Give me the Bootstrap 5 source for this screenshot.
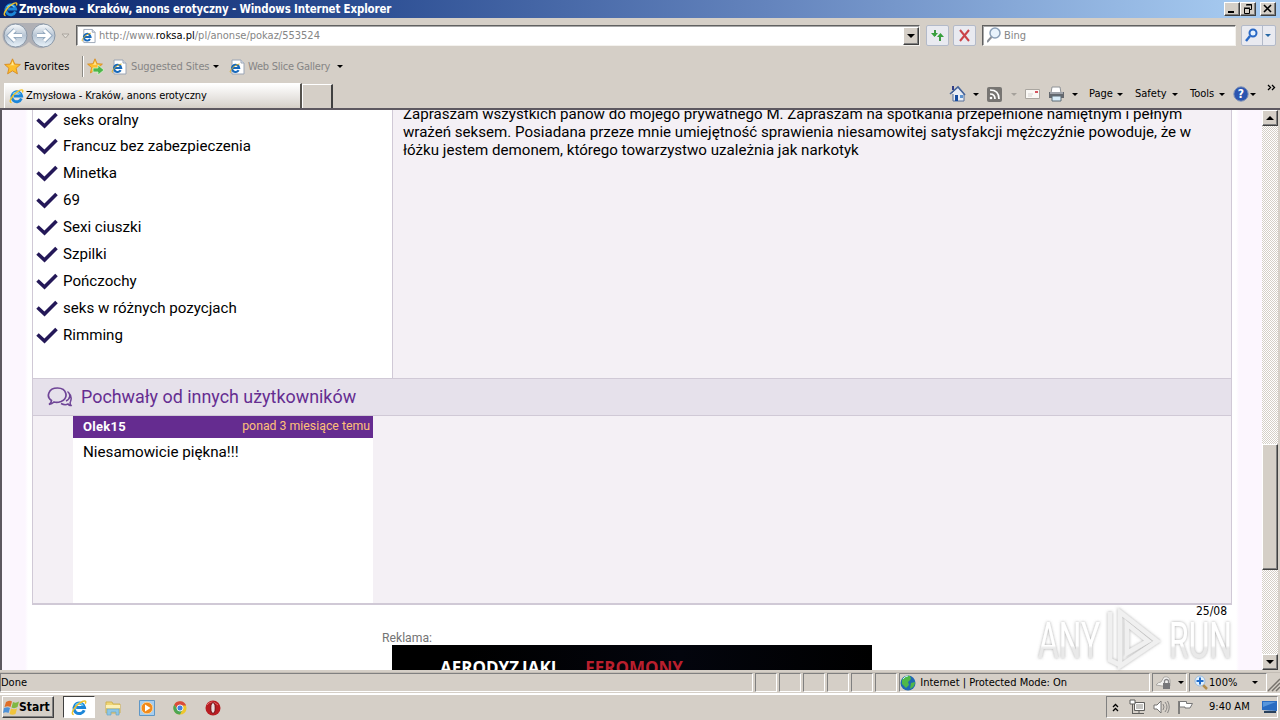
<!DOCTYPE html>
<html lang="pl">

<head>
    <meta charset="UTF-8">
    <meta name="viewport" content="width=device-width, initial-scale=1.0">
    <title>Zmysłowa - Kraków, anons erotyczny</title>
    <link href="https://cdn.jsdelivr.net/npm/bootstrap@5.3.3/dist/css/bootstrap.min.css" rel="stylesheet">
    <style>
        body { width: 1280px; height: 720px; overflow: hidden; background: #d5cfc7; color: #000; font: 11px/14px "DejaVu Sans Condensed", "DejaVu Sans", sans-serif; white-space: nowrap; }
        svg { flex: none; display: block; }
        .sunken { border: 1px solid; border-color: #808080 #fff #fff #808080; }
        .raised { border: 1px solid; border-color: #fff #404040 #404040 #fff; box-shadow: inset -1px -1px #808080; background: #d5cfc7; }
        .dim { color: #858585; }
        .arr { width: 0; height: 0; flex: none; border: 3px solid transparent; border-top-color: #000; border-bottom: 0; }
        .arr.off { border-top-color: #a5a19b; }
        .arr.big { border-width: 4px 4px 0; }

        /* title bar */
        .titlebar { height: 18px; padding-left: 3px; background: linear-gradient(90deg, #0a246a 0%, #2c4e93 28%, #6484bd 60%, #a6caf0 97%); color: #fff; font-weight: bold; font-size: 11.4px; letter-spacing: -.13px; }
        .win-btn { width: 16px; height: 14px; }

        /* address bar */
        .addressbar { height: 35px; padding-left: 2px; }
        .field { height: 21px; background: #fff; border: 1px solid; border-color: #606060 #f4f2ee #f4f2ee #606060; box-shadow: inset 1px 1px #a8a8a8; }
        .url-field { width: 844px; margin-left: 6px; }
        .drop-btn { width: 16px; height: 18px; }
        .tool-btn { height: 21px; background: #e9eaf0; border: 1px solid #b3bac9; border-radius: 2px; }
        #url { margin-left: 3px; }
        #reload { margin-left: 6px; }
        #search { width: 254px; margin-left: 6px; }
        #search span { margin-left: -2px; }
        #go { margin-left: 5px; }

        /* favorites */
        .favbar { height: 27px; padding-left: 4px; }
        .favbar-sep { width: 1px; height: 21px; background: #8c8a84; box-shadow: 1px 0 #fff; }
        #fav { width: 58px; margin-left: 3px; letter-spacing: .1px; }
        #sites-icon { margin-left: 6px; }
        #sites { width: 82px; margin-left: 4px; letter-spacing: -.1px; }
        #slice-icon { margin-left: 10px; }
        #slice { width: 89px; margin-left: 3px; letter-spacing: -.25px; }

        /* tabs and command bar */
        .tabrow { height: 28px; padding-left: 4px; }
        .tab { width: 298px; height: 25px; background: linear-gradient(#fff, #dedad5 80%, #d5cfc7); border: 1px solid #fff; border-right: 2px solid #55524d; border-bottom: 0; padding-left: 4px; }
        .new-tab { width: 31px; height: 24px; border: 1px solid #fff; border-right: 2px solid #404040; border-bottom: 0; }
        #tab-title { margin-left: 2px; letter-spacing: -.1px; }
        #commands { margin-left: 616px; }
        #a1 { margin: 0 8px 0 7px; }
        #a2 { margin: 0 8px 0 9px; }
        #printer { margin-left: 8px; }
        #a3 { margin: 0 11px 0 7px; }
        .menu-page { width: 28px; }
        .menu-safety { width: 37px; margin-left: 12px; }
        .menu-tools { width: 29px; margin-left: 12px; }
        #help { margin: 0 1px 0 8px; }
        #more { margin: -12px 0 0 11px; }

        /* page */
        .viewport-row { height: 562px; border-top: 2px solid #5d5860; border-left: 2px solid #5d5860; }
        .page { width: 1260px; height: 560px; background: linear-gradient(90deg, #fcf6fe 23px, #fff 26px, #fff 1234px, #fcf6fe 1237px); padding: 0 30px; font-family: Roboto, sans-serif; font-size: 16px; line-height: 18px; }
        .panel { width: 1200px; height: 495px; border: 1px solid #d0c9d6; border-top: 0; border-bottom-width: 2px; background: #f4f0f5; }
        .profile { height: 268px; }
        .services { width: 360px; background: #fff; border-right: 1px solid #d0c9d6; padding: 0 0 0 3px; margin: 0; flex: none; }
        .services li { height: 27px; display: flex; align-items: center; gap: 5px; font-size: 15.1px; }
        .services li:first-child { height: 25px; margin-top: -3px; }
        .about { padding: 0 0 0 10px; margin-top: -5px; font-size: 15.1px; }
        .praise-head { height: 38px; background: #e6e1eb; border: solid #d0c9d6; border-width: 1px 0; color: #652d91; font-size: 17.9px; padding-left: 14px; }
        #praise-title { margin-left: 8px; }
        .praise-body { padding-left: 40px; }
        .praise { width: 300px; height: 187px; background: #fff; }
        .praise-name { height: 22px; background: #652c90; color: #fff; font-size: 13px; font-weight: bold; padding: 0 3px 0 10px; }
        #nick { letter-spacing: .3px; }
        .praise-date { color: #ffc179; font-weight: normal; font-size: 12.3px; padding-bottom: 2px; }
        #praise-text { padding: 5px 10px; font-size: 15.2px; }
        .page-date { font: 12px/12px "DejaVu Sans Condensed", sans-serif; height: 16px; padding-right: 5px; }
        .ad-label { color: #747474; font-size: 12.2px; height: 24px; padding: 8px 0 0 350px; }
        .ad { width: 480px; height: 25px; margin-left: 360px; background: linear-gradient(90deg, #000 15%, #03050d 60%, #000); font: bold 17px/20px "Open Sans", sans-serif; overflow: hidden; padding: 13px 0 0 48px; }
        .ad-gap { margin-left: 3px; }
        .ad-red { color: #b91f2d; margin-left: 29px; }

        .scrollbar { width: 16px; height: 560px; background: repeating-conic-gradient(#fff 0 25%, #d5cfc7 0 50%) 0 0 / 2px 2px; }
        .scroll-btn { height: 16px; }
        .scroll-thumb { height: 126px; margin-top: 318px; }
        #scroll-down { margin-top: 84px; }
        .up { transform: rotate(180deg); }
        .watermark { position: absolute; left: 1034px; top: 604px; }

        /* status bar */
        .statusbar { height: 22px; margin-top: 2px; border-bottom: 1px solid #fff; border-top: 1px solid #c3bdb5; }
        .statusbar .sunken { height: 19px; }
        #done { width: 754px; padding-top: 2px; }
        .cell { width: 22px; margin-left: 2px; }
        #zone { width: 251px; margin-left: 2px; gap: 4px; }
        #lock { width: 35px; margin-left: 2px; padding-left: 2px; gap: 3px; }
        #zoom { width: 78px; margin-left: 2px; padding: 0 8px 0 4px; gap: 1px; }

        /* taskbar */
        .taskbar { height: 25px; border-top: 1px solid #fff; padding: 1px 2px 0; }
        .start { width: 52px; height: 22px; font-weight: bold; font-size: 12px; }
        #start-label { margin-left: -1px; }
        .task-on { width: 32px; height: 22px; background: #fff; border-color: #404040 #fff #fff #404040; margin-left: 9px; }
        #quick { gap: 18px; margin-left: 10px; }
        .tray { width: 172px; height: 22px; }
        #chev { margin-left: 5px; }
        #net { margin-left: 10px; }
        #vol { margin-left: 7px; }
        #flag { margin-left: 7px; }
        #clock { margin: 0 12px 0 15px; }
    </style>
</head>

<body class="d-flex flex-column">
    <!-- shared icons -->
    <svg width="0" height="0" class="position-absolute">
        <defs>
            <linearGradient id="orb" x2="0" y2="1">
                <stop stop-color="#f9fbfd" />
                <stop offset=".5" stop-color="#b7c5d4" />
                <stop offset="1" stop-color="#e9f3fa" />
            </linearGradient>
            <symbol id="ie" viewBox="0 0 16 16">
                <path d="M13.200 10.700A5.300 5.300 0 1 1 13.500 8H5.200" fill="none" stroke="#1c86d8" stroke-width="3" />
                <path d="M12.200 6.200A4.600 4.600 0 0 0 4.200 6" fill="none" stroke="#6fd0f8" stroke-width="1.300" />
                <path d="M2.800 15C-1 15 3 7.500 8.500 3.700 12.500.9 16 .3 14.300 4.200" fill="none" stroke="#f0c32b" stroke-width="1.500" />
            </symbol>
            <symbol id="page-ie" viewBox="0 0 16 16">
                <path d="M3 1h9l3 3v11H3z" fill="#fff" stroke="#9ba5b5" />
                <path d="M12 1v3h3" fill="#dde4ee" stroke="#9ba5b5" />
                <path d="M9.700 11.200A3.600 3.600 0 1 1 10.200 9H4" fill="none" stroke="#1769bb" stroke-width="2.100" />
                <path d="M2 13.500C-1 13 5 6 10.500 5" fill="none" stroke="#d9b22a" />
            </symbol>
            <symbol id="star" viewBox="0 0 16 16">
                <path d="M8 .8l2.100 4.900 5.300.4-4 3.500 1.200 5.300L8 12.100l-4.600 2.800 1.200-5.300-4-3.500 5.300-.4z" fill="#fdbf2d" stroke="#d6861b" stroke-width=".8" />
                <path d="M8 3l1.300 3.500 3 .3H5L7 6z" fill="#ffe89a" />
            </symbol>
            <symbol id="check" viewBox="0 0 22 18">
                <path d="M1.500 8.500l7 6.500L20.500 3" fill="none" stroke="#241858" stroke-width="3.600" />
            </symbol>
        </defs>
    </svg>

    <div class="titlebar d-flex align-items-center">
        <svg width="15" height="16"><use href="#ie" /></svg>
        <span class="me-auto" id="win-title">&#8202;Zmysłowa - Kraków, anons erotyczny - Windows Internet Explorer</span>
        <span class="raised win-btn"><svg width="14" height="12"><path d="M3 8h6v2H3z" /></svg></span>
        <span class="raised win-btn"><svg width="14" height="12"><path d="M5.500 1.500h5v5h-2M5 2h6M3.500 5.500h5v5h-5zM3 5h6" fill="none" stroke="#000" /></svg></span>
        <span class="raised win-btn ms-1 me-1"><svg width="14" height="12"><path d="M3 2l7 7M10 2L3 9" stroke="#000" stroke-width="1.600" /></svg></span>
    </div>

    <div class="addressbar d-flex align-items-center">
        <svg width="68" height="28">
            <path d="M13 1h28a13 13 0 0 1 0 25q-7 1-14-6-7 7-14 6A12 12 0 0 1 13 1z" fill="#b0b0b5" />
            <g fill="url(#orb)" stroke="#8896a6">
                <circle cx="13.500" cy="13.500" r="11.500" />
                <circle cx="41.500" cy="13.500" r="11.500" />
            </g>
            <path d="M20 13.500H8M13 8l-5.500 5.500L13 19M35 13.500h12M42 8l5.500 5.500L42 19" fill="none" stroke="#8da4bb" stroke-width="4.600" />
            <path d="M20 13.500H8M13 8l-5.500 5.500L13 19M35 13.500h12M42 8l5.500 5.500L42 19" fill="none" stroke="#fff" stroke-width="3" />
            <path d="M60 12h7l-3.500 4z" fill="#e2ded8" stroke="#aaa59e" />
        </svg>
        <div class="field url-field d-flex align-items-center">
            <svg class="ms-1" width="15" height="16"><use href="#page-ie" /></svg>
            <span class="dim me-auto" id="url">http://www.<span class="text-black">roksa.pl</span>/pl/anonse/pokaz/553524</span>
            <span class="raised drop-btn d-flex align-items-center justify-content-center"><i class="arr big"></i></span>
        </div>
        <span class="tool-btn d-flex align-items-center px-1" id="reload">
            <svg width="13" height="15"><path d="M4 2v6M9 13V7" stroke="#2f8f34" stroke-width="1.800" /><path d="M0 5h7L3.500 9zM6 9h7L9.500 5z" fill="#37a03b" /></svg>
        </span>
        <span class="tool-btn d-flex align-items-center ms-1 px-1">
            <svg width="13" height="13"><path d="M2 1l9 11M11 1l-9 11" stroke="#cb4248" stroke-width="2" /></svg>
        </span>
        <div class="field d-flex align-items-center" id="search">
            <svg class="mx-1" width="15" height="17"><circle cx="8" cy="6" r="5" fill="#e9f3fc" stroke="#8ba0b8" stroke-width="1.500" /><path d="M4.500 10L0 15" stroke="#8b8f96" stroke-width="2" /></svg>
            <span class="dim">Bing</span>
        </div>
        <span class="tool-btn d-flex align-items-center" id="go">
            <svg width="33" height="19"><circle cx="11" cy="7" r="3.500" fill="#e6f2ff" stroke="#2868c5" stroke-width="2" /><path d="M8 10l-4 5" stroke="#2868c5" stroke-width="2.400" /><path d="M20.500 0v19" stroke="#b3bac9" /><path d="M23 8h6l-3 3z" fill="#2868a5" /></svg>
        </span>
    </div>

    <div class="favbar d-flex align-items-center">
        <svg width="17" height="17"><use href="#star" /></svg>
        <span id="fav">Favorites</span>
        <span class="favbar-sep"></span>
        <svg class="ms-1" width="18" height="17"><use href="#star" width="16" height="16" /><path d="M6 10h5V7l6 5-6 5v-3H6z" fill="#4cb64a" stroke="#d9f4cf" stroke-width=".8" /></svg>
        <svg id="sites-icon" width="16" height="16"><use href="#page-ie" /></svg>
        <span class="dim" id="sites">Suggested Sites</span><i class="arr"></i>
        <svg id="slice-icon" width="16" height="16"><use href="#page-ie" /></svg>
        <span class="dim" id="slice">Web Slice Gallery</span><i class="arr"></i>
    </div>

    <div class="tabrow d-flex align-items-end">
        <div class="tab d-flex align-items-center">
            <svg width="15" height="16"><use href="#ie" /></svg>
            <span id="tab-title">Zmysłowa - Kraków, anons erotyczny</span>
        </div>
        <div class="new-tab"></div>
        <div class="d-flex align-items-center align-self-center" id="commands">
            <svg width="17" height="18"><path d="M3 8l6-6 6 7v7H4V9" fill="#e9edf5" stroke="#59709a" /><path d="M1 9l8-7 7 8" fill="none" stroke="#46659b" stroke-width="1.600" /><path d="M3 1h2v4H3z" fill="#333f87" /><path d="M6 10h3v6H6z" fill="#174da0" /><path d="M11 10h3v3h-3z" fill="#5c93d0" /></svg>
            <i class="arr" id="a1"></i>
            <svg width="15" height="15"><rect width="15" height="15" rx="2" fill="#777572" /><path d="M3 3q9 0 9 9M3 7q5 0 5 5" fill="none" stroke="#fff" stroke-width="1.700" /><circle cx="4" cy="11" r="1.300" fill="#fff" /></svg>
            <i class="arr off" id="a2"></i>
            <svg width="15" height="12"><path d="M.5 1.500h14v9H.5z" fill="#faf8f5" stroke="#aaa6a0" /><path d="M10 3h3v2h-3z" fill="#d5545e" /><path d="M3 6h5M3 8h4" stroke="#d5d2d0" /></svg>
            <svg id="printer" width="17" height="16"><path d="M4 1h8l1 6H3z" fill="#fff" stroke="#8e9296" /><path d="M1 6h15v6H1z" fill="#64686e" /><path d="M2 7h13" stroke="#b4b9c0" stroke-width="1.500" /><path d="M4 10h9v5H4z" fill="#d9edf9" stroke="#5f6c77" /></svg>
            <i class="arr" id="a3"></i>
            <span class="menu-page">Page</span><i class="arr"></i>
            <span class="menu-safety">Safety</span><i class="arr"></i>
            <span class="menu-tools">Tools</span><i class="arr"></i>
            <svg id="help" width="16" height="16"><circle cx="8" cy="8" r="7.200" fill="#2b55b0" stroke="#8193b7" /><text x="8" y="12.300" text-anchor="middle" font-size="12" font-weight="bold" fill="#fff">?</text></svg>
            <i class="arr"></i>
            <svg id="more" width="9" height="8"><path d="M1 1l2.500 2.500L1 6M5 1l2.500 2.500L5 6" fill="none" stroke="#000" stroke-width="1.300" /></svg>
        </div>
    </div>

    <div class="viewport-row d-flex overflow-hidden">
        <div class="page">
            <div class="panel">
                <div class="profile d-flex">
                    <ul class="services list-unstyled" id="services"></ul>
                    <div class="about">Zapraszam wszystkich panów do mojego prywatnego M. Zapraszam na spotkania przepełnione namiętnym i pełnym<br>wrażeń seksem. Posiadana przeze mnie umiejętność sprawienia niesamowitej satysfakcji mężczyźnie powoduje, że w<br>łóżku jestem demonem, którego towarzystwo uzależnia jak narkotyk</div>
                </div>
                <div class="praise-head d-flex align-items-center">
                    <svg width="26" height="24"><path d="M19 16c4.500-2 5-7 1.500-9.500M14 18.500q4 2 7 .5 1.500 2 3 1.500-1.500-2-.5-4 2-5-2-9" fill="none" stroke="#6f4597" stroke-width="1.500" /><path d="M4.500 15.500C-1 12 1 3 10.500 3S22 13 14 16.500q-4 1.500-7 .5-2 2-5 2.500 2.500-1.500 2.500-4z" fill="#e6e1eb" stroke="#6f4597" stroke-width="1.700" /></svg>
                    <span id="praise-title">Pochwały od innych użytkowników</span>
                </div>
                <div class="praise-body">
                    <div class="praise">
                        <div class="praise-name d-flex justify-content-between align-items-center"><span id="nick">Olek15</span><span class="praise-date">ponad 3 miesiące temu</span></div>
                        <div id="praise-text">Niesamowicie piękna!!!</div>
                    </div>
                </div>
            </div>
            <div class="page-date text-end">25/08</div>
            <div class="ad-label">Reklama:</div>
            <div class="ad text-white">AERODYZ<span class="ad-gap">JAKI</span><span class="ad-red">FEROMONY</span></div>
        </div>
        <div class="scrollbar">
            <div class="raised scroll-btn d-flex align-items-center justify-content-center"><i class="arr big up"></i></div>
            <div class="raised scroll-thumb"></div>
            <div class="raised scroll-btn d-flex align-items-center justify-content-center" id="scroll-down"><i class="arr big"></i></div>
        </div>
    </div>

    <svg class="watermark" width="202" height="68">
        <defs>
            <filter id="soft" x="-10%" y="-20%" width="120%" height="140%"><feDropShadow dx="0" dy="0" stdDeviation="1.600" flood-color="#777" flood-opacity=".65" /></filter>
            <linearGradient id="fade" x2="0" y2="1"><stop offset=".58" stop-color="#fff" /><stop offset=".62" stop-color="#e9e9e9" /></linearGradient>
        </defs>
        <g filter="url(#soft)" fill="url(#fade)" font-family="Roboto" font-size="50">
            <text x="4" y="54" textLength="62" lengthAdjust="spacingAndGlyphs">ANY</text>
            <text x="135" y="54" textLength="63" lengthAdjust="spacingAndGlyphs">RUN</text>
            <path d="M76 8v48l12 6M86 8v54l37-25zM93 20v29l21-12z" fill="none" stroke="#f0f0f0" stroke-width="4.500" />
        </g>
    </svg>

    <div class="statusbar d-flex">
        <div class="sunken" id="done">Done</div>
        <div class="sunken cell"></div><div class="sunken cell"></div><div class="sunken cell"></div><div class="sunken cell"></div><div class="sunken cell"></div><div class="sunken cell"></div>
        <div class="sunken d-flex align-items-center" id="zone">
            <svg width="16" height="16"><circle cx="8" cy="8" r="7.500" fill="#1f68b4" /><path d="M2 5q3-5 8-4l1 3-3 3 1 3-3 3-4-4zM11 8l4-1q0 5-5 7z" fill="#4fb848" /><path d="M3 4q2-3 5-3" stroke="#c6ecfa" fill="none" /></svg>
            <span>Internet | Protected Mode: On</span>
        </div>
        <div class="sunken d-flex align-items-center" id="lock">
            <svg width="20" height="16"><path d="M1 10q2-3 5-3l3-5q5-1 6 3v6H7z" fill="#f3f2f0" stroke="#aaa7a3" /><path d="M8 8h7v6H8z" fill="#77777a" /><path d="M9.500 8V5.500q2-2 4 0V8" fill="none" stroke="#88878a" stroke-width="1.300" /></svg>
            <i class="arr"></i>
        </div>
        <div class="sunken d-flex align-items-center" id="zoom">
            <svg width="14" height="15"><path d="M8 9l5 5" stroke="#b38d4d" stroke-width="2.500" /><circle cx="6" cy="6" r="5" fill="#e3f1fd" stroke="#9bbbdc" /><path d="M6 2.500v7M2.500 6h7" stroke="#216dcb" stroke-width="2" /></svg>
            <span>100%</span><i class="arr ms-auto"></i>
        </div>
        <svg width="13" height="19"><path d="M1 18L13 6M5 18l8-8M9 18l4-4" stroke="#77736d" stroke-width="1.500" /></svg>
    </div>

    <div class="taskbar d-flex">
        <div class="raised start d-flex align-items-center">
            <svg width="17" height="17"><path d="M3 3q4-2 6-.5L7.500 8Q5 6.500 1.500 8z" fill="#df6e28" /><path d="M10 3q3 1.500 6-.5L14.500 8q-3 2-6 .5z" fill="#80b842" /><path d="M1 9q4-1.500 6 0l-1.500 5Q3 12.500 0 14z" fill="#4d91d8" /><path d="M8 9.500q3 1.500 6 0L12.500 15q-3 1.500-6 0z" fill="#f0c43c" /></svg>
            <span id="start-label">Start</span>
        </div>
        <div class="sunken task-on d-flex align-items-center justify-content-center"><svg width="16" height="17"><use href="#ie" /></svg></div>
        <div class="d-flex align-items-center" id="quick">
            <svg width="16" height="16"><path d="M1 2h6l1 2h7v9H1z" fill="#f0d674" stroke="#cfb252" /><path d="M1 5h14v3H1z" fill="#fcf0b5" /><path d="M2 15V9h12v6h-3v-3H6v3z" fill="#8dc7e5" stroke="#6ea6c8" stroke-width=".7" /></svg>
            <svg width="16" height="16"><path d="M.5.5h15v15H.5z" fill="#a8ceef" stroke="#5f97c6" /><circle cx="8" cy="8" r="5.800" fill="#f28a1b" stroke="#fbd094" /><path d="M6 4.500l5.500 3.500L6 11.500z" fill="#fff" /></svg>
            <svg width="14" height="14" viewBox="0 0 16 16"><circle cx="8" cy="8" r="7.500" fill="#efc72d" /><path d="M1.500 4A7.500 7.500 0 0 1 15 5H8L5 9z" fill="#da4a3c" /><path d="M1.500 4A7.500 7.500 0 0 0 8 15.500l3-6H5z" fill="#4da653" /><circle cx="8" cy="8" r="3.500" fill="#4381df" stroke="#fff" /></svg>
            <svg width="16" height="16"><circle cx="8" cy="8" r="7.500" fill="#b81d22" /><path d="M2 5q4-6 11 0" stroke="#e36466" fill="none" /><ellipse cx="8" cy="8" rx="2.200" ry="5.300" fill="#e9dede" stroke="#750e13" /></svg>
        </div>
        <div class="sunken tray ms-auto d-flex align-items-center">
            <svg id="chev" width="7" height="9"><path d="M1 4l2.500-2.500L6 4M1 8l2.500-2.500L6 8" fill="none" stroke="#000" stroke-width="1.300" /></svg>
            <svg id="net" width="17" height="16"><path d="M5.500 3.500h10v8h-10zM3 14.500h12M10 12v2" fill="#c5c4c1" stroke="#5f5e5c" /><path d="M6.500 4.500h8v6h-8z" fill="none" stroke="#fff" /><path d="M1 1h5v4H1zM3.500 5v9" fill="#fff" stroke="#5f5e5c" /></svg>
            <svg id="vol" width="17" height="16"><path d="M1 6h3l4-4v12L4 10H1z" fill="#fff" stroke="#757371" /><path d="M10 5q2 3 0 6M12 3q4 5 0 10M14.500 2q3.500 6 0 12" fill="none" stroke="#898785" /></svg>
            <svg id="flag" width="17" height="16"><path d="M2 2v13" stroke="#666" stroke-width="1.500" /><path d="M2.500 2.500h7v2h6L13 9H8V8H2.500z" fill="#fff" stroke="#777" /></svg>
            <span id="clock">9:40 AM</span>
            <svg width="16" height="14"><path d="M0 1h15v10l-15-1z" fill="#276bc1" /><path d="M1 2h13L1 7z" fill="#5796dc" /><path d="M2 12h12" stroke="#28405b" stroke-width="2" /></svg>
        </div>
    </div>

    <script src="https://cdn.jsdelivr.net/npm/bootstrap@5.3.3/dist/js/bootstrap.bundle.min.js"></script>
    <script>
        const services = ['seks oralny', 'Francuz bez zabezpieczenia', 'Minetka', '69', 'Sexi ciuszki', 'Szpilki', 'Pończochy', 'seks w różnych pozycjach', 'Rimming'];
        const list = document.getElementById('services');
        services.forEach(name => {
            const item = document.createElement('li');
            item.innerHTML = '<svg width="22" height="18"><use href="#check" /></svg><span></span>';
            item.querySelector('span').innerText = name;
            list.appendChild(item);
        });
    </script>
</body>

</html>
